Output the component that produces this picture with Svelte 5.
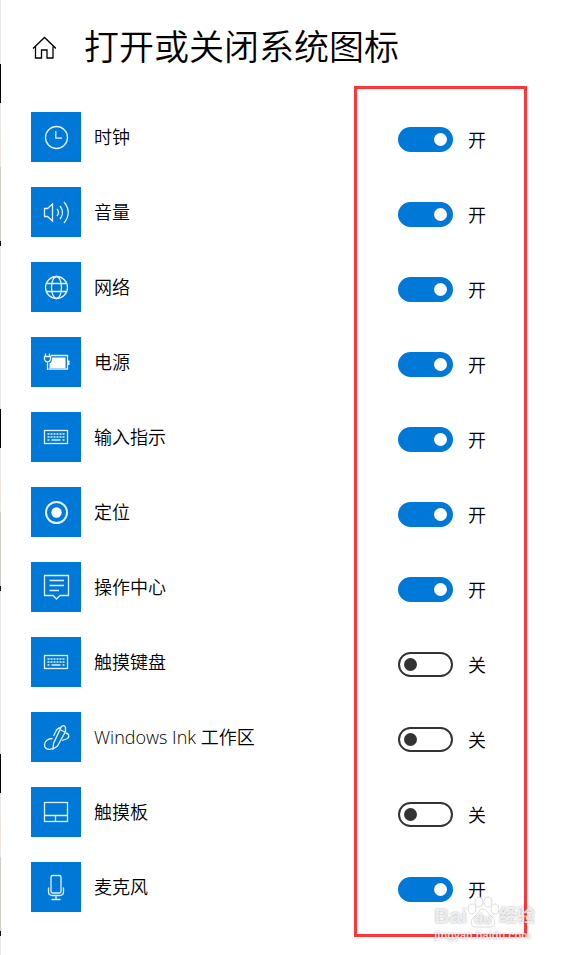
<script lang="ts">
  type Icon =
    | 'clock'
    | 'volume'
    | 'network'
    | 'power'
    | 'keyboard'
    | 'location'
    | 'action'
    | 'ink'
    | 'touchpad'
    | 'microphone';

  let items = $state<{ id: string; icon: Icon; name: string; on: boolean }[]>([
    { id: 'clock', icon: 'clock', name: '时钟', on: true },
    { id: 'volume', icon: 'volume', name: '音量', on: true },
    { id: 'network', icon: 'network', name: '网络', on: true },
    { id: 'power', icon: 'power', name: '电源', on: true },
    { id: 'input', icon: 'keyboard', name: '输入指示', on: true },
    { id: 'location', icon: 'location', name: '定位', on: true },
    { id: 'action', icon: 'action', name: '操作中心', on: true },
    { id: 'touch-keyboard', icon: 'keyboard', name: '触摸键盘', on: false },
    { id: 'ink', icon: 'ink', name: 'Windows Ink 工作区', on: false },
    { id: 'touchpad', icon: 'touchpad', name: '触摸板', on: false },
    { id: 'microphone', icon: 'microphone', name: '麦克风', on: true }
  ]);
</script>

<main class="page">
  <header class="header">
    <button type="button" class="home">
      <svg viewBox="0 0 24 24" aria-hidden="true">
        <path d="M1 13.500 12.500 2.500 24 13.500M3.500 11.500v11.500h6v-8h5.500v8h6V11.500" />
      </svg>
    </button>
    <h1>打开或关闭系统图标</h1>
  </header>

  <section class="settings">
    <ul class="list">
      {#each items as item (item.id)}
        <li class="row">
          <span class="tile">
            <svg viewBox="0 0 50 50" aria-hidden="true">
              {#if item.icon === 'clock'}
                <circle cx="25.5" cy="25.5" r="11" />
                <path d="M24.8 19v7.2h6.2" />
              {:else if item.icon === 'volume'}
                <path d="M13.5 21.5h3l5-4.5v17l-5-4.5h-3z" />
                <path d="M26 22q3 3.5 0 7M29 19q5 6.5 0 13M33 15q8.5 10.5 0 21" />
              {:else if item.icon === 'network'}
                <circle cx="25.5" cy="25.5" r="11" />
                <ellipse cx="25.5" cy="25.5" rx="5" ry="11" />
                <path d="M15.5 21.5h20M15.5 29.5h20" />
              {:else if item.icon === 'power'}
                <path d="M20 18.5h16.5v13.500h-19" />
                <path class="solid" d="M21 20.5h13.5V31h-16v-4.5q2.5-1.5 2.5-4zM37 23.5h1.5V28H37z" />
                <path d="M14.5 16.5v3M18.5 16.5v3M13.500 19.5h6v3q-1 2.500-3 2.500t-3-2.500zM16.500 25v8" />
              {:else if item.icon === 'keyboard'}
                <rect x="13.5" y="18.5" width="23" height="13" />
                <path class="keys" d="M16.5 22h17M16.5 25h17" />
                <path d="M16.5 28h2M20.5 28h9M31.5 28h2" />
              {:else if item.icon === 'location'}
                <circle class="ring" cx="25.5" cy="25.5" r="10.5" />
                <circle class="solid" cx="25.5" cy="25.5" r="5.2" />
              {:else if item.icon === 'action'}
                <path d="M13.5 13.5h24v20H29L25.5 37 22 33.5h-8.5z" />
                <path d="M18.5 18.5H33M18.5 23.5H33M18.5 28.5H28" />
              {:else if item.icon === 'ink'}
                <path d="M30.5 14.5q2.5-2 4 1v4L26.5 34 22 37l.5-5.5z" />
                <path d="M30 15.5q-4 .5-5.5 4.5l-2 4M29.5 18l4.5 2" />
                <path d="M21.5 26.5c-5 0-8 3-8 6.5s4 5.5 8 3.5M34.5 21c4 .5 4.5 4.500 1 6L31 28.500" />
              {:else if item.icon === 'touchpad'}
                <rect x="13.5" y="15.5" width="23" height="19" />
                <path d="M13.5 28.5h23M24.5 28.5v6" />
              {:else}
                <rect x="20" y="13.5" width="10" height="17.5" rx="1.5" />
                <path d="M17.5 25.5v4q0 4 4 4h7q4 0 4-4v-4M25 33.5v4M20.5 37.5h9" />
              {/if}
            </svg>
          </span>
          <label class="name" for={item.id}>{item.name}</label>
          <span class="control">
            <input id={item.id} class="switch" type="checkbox" role="switch" bind:checked={item.on} />
            <span class="state">{item.on ? '开' : '关'}</span>
          </span>
        </li>
      {/each}
    </ul>
    <div class="frame"></div>
    <div class="watermark">
      <div class="brand">
        <span>Bai</span>
        <span class="paw">
          <svg viewBox="0 0 32 32" aria-hidden="true">
            <ellipse cx="5" cy="13" rx="4" ry="5" />
            <ellipse cx="12" cy="6" rx="4" ry="5" />
            <ellipse cx="21" cy="6" rx="4" ry="5" />
            <ellipse cx="28" cy="13" rx="4" ry="5" />
            <path d="M16 13c-4 0-5 5-9 8s-4 10 2 10h14c6 0 6-7 2-10s-5-8-9-8z" />
          </svg>
          <span class="du">du</span>
        </span>
        <span class="cjk">经验</span>
      </div>
      <div class="site">jingyan.baidu.com</div>
    </div>
  </section>
</main>

<style>
  :global(body) {
    margin: 0;
    background: #fff;
  }

  .page {
    box-sizing: border-box;
    min-height: 100vh;
    padding: 20px 41px 18px 31px;
    color: #000;
    font-family: 'Open Sans', 'Noto Sans CJK SC', sans-serif;
    font-size: 18px;
    font-weight: 350;
    /* sliver of the window behind, along the left edge */
    background: repeating-linear-gradient(
        #e8e8e6 0 64px,
        #000 64px 103px,
        #e9e7e1 103px 135px,
        #efe2d8 135px 155px,
        #e9e7e1 155px 167px,
        #cfccc3 167px 241px,
        #111 241px 246px,
        #e8e8e6 246px 345px
      )
      left top / 1px 100% no-repeat;
  }

  .header {
    display: flex;
    align-items: center;
    gap: 27px;
    height: 54px;
  }

  .home {
    width: 26px;
    height: 26px;
    border: 0;
    padding: 1px;
    background: transparent;
  }

  .home svg {
    display: block;
    width: 24px;
    height: 24px;
    fill: none;
    stroke: #000;
    stroke-width: 1.3;
  }

  h1 {
    margin: 0;
    font-size: 35px;
    font-weight: 350;
    line-height: 54px;
  }

  .settings {
    position: relative;
    padding-top: 38px;
    padding-bottom: 25px;
  }

  .list {
    display: grid;
    gap: 25px;
    margin: 0;
    padding: 0;
    list-style: none;
  }

  .row {
    display: grid;
    grid-template-columns: 50px minmax(0, 1fr) 129px;
    align-items: center;
    column-gap: 13px;
    height: 50px;
  }

  .tile {
    height: 50px;
    background: #0078d7;
  }

  .tile svg {
    display: block;
    width: 50px;
    height: 50px;
    fill: none;
    stroke: #e3f0fb;
    stroke-width: 1.3;
  }

  .tile .solid {
    fill: #fff;
    stroke: none;
  }

  .tile .ring {
    stroke-width: 2;
  }

  .tile .keys {
    stroke-width: 1.5;
    stroke-dasharray: 2 1;
  }

  .name {
    line-height: 26px;
  }

  .control {
    display: flex;
    align-items: center;
    gap: 15px;
    padding-top: 5px;
  }

  .switch {
    display: flex;
    flex: none;
    align-items: center;
    box-sizing: border-box;
    width: 55px;
    height: 25px;
    margin: 0;
    border: 2px solid #333;
    border-radius: 13px;
    padding: 0 4px;
    background: #fff;
    appearance: none;
  }

  .switch::before {
    width: 13px;
    height: 13px;
    border-radius: 50%;
    background: #333;
    content: '';
  }

  .switch:checked {
    justify-content: flex-end;
    border-color: #0078d7;
    background: #0078d7;
  }

  .switch:checked::before {
    background: #fff;
  }

  .state {
    line-height: 26px;
  }

  .frame {
    position: absolute;
    top: 12px;
    right: 0;
    bottom: 0;
    box-sizing: border-box;
    width: 173px;
    border: 3px solid #fd3638;
    pointer-events: none;
  }

  .watermark {
    position: absolute;
    right: -8px;
    bottom: -5px;
    color: rgb(255 255 255 / 75%);
    font-family: 'Liberation Sans', 'Noto Sans CJK SC', sans-serif;
    font-weight: 700;
    text-shadow: 0 0 2px rgb(0 0 0 / 35%);
    pointer-events: none;
  }

  .brand {
    display: flex;
    align-items: flex-end;
    font-size: 21px;
    line-height: 24px;
  }

  .paw {
    display: grid;
    place-items: end center;
  }

  .paw svg,
  .du {
    grid-area: 1 / 1;
  }

  .paw svg {
    width: 32px;
    height: 32px;
    fill: rgb(255 255 255 / 75%);
    stroke: #dcdcdc;
  }

  .du {
    font-size: 14px;
    line-height: 18px;
  }

  .cjk {
    font-size: 18px;
  }

  .site {
    font-size: 11px;
    line-height: 14px;
  }
</style>
